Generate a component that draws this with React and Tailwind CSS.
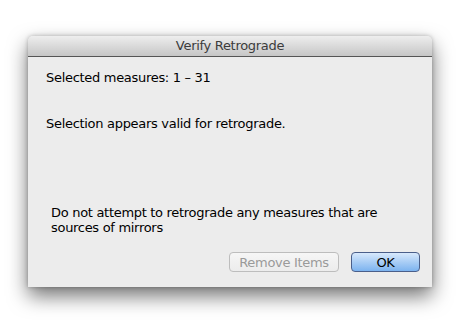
import React from "react";

const font = { fontFamily: '"Lucida Grande", "DejaVu Sans", sans-serif' };

export default function App() {
  return (
    <div
      className="flex h-[324px] w-[460px] items-start bg-white pl-[28px] pt-[36px] text-[13px] tracking-[-0.3px] text-black"
      style={font}
    >
      <div className="flex h-[251px] w-[404px] flex-col overflow-hidden rounded-t-[5px] bg-[#ececec] shadow-[0_9px_20px_rgba(0,0,0,0.55),0_0_4px_rgba(0,0,0,0.25)]">
        {/* title bar */}
        <div className="flex h-[21px] shrink-0 items-center justify-center border-b border-[#555555] bg-gradient-to-b from-[#eeeeee] to-[#c6c6c6] text-[#3c3c3c]">
          Verify Retrograde
        </div>

        <div className="flex flex-1 flex-col pb-[15px] pr-[12px]">
          <p className="ml-[18px] mt-[13px] leading-[16px]">Selected measures: 1 – 31</p>
          <p className="ml-[18px] mt-[30px] leading-[16px]">
            Selection appears valid for retrograde.
          </p>
          <p className="ml-[23px] mt-auto w-[340px] leading-[15px]">
            Do not attempt to retrograde any measures that are sources of mirrors
          </p>
          <div className="mt-[17px] flex justify-end gap-[12px]">
            <button
              disabled
              className="h-[20px] w-[110px] rounded-[4px] border border-[#bdbdbd] bg-gradient-to-b from-[#f6f6f6] to-[#ececec] text-[#9a9a9a]"
            >
              Remove Items
            </button>
            <button className="h-[20px] w-[69px] rounded-[4px] border border-[#4b5f8a] bg-gradient-to-b from-[#d8e9fc] via-[#a9cdf5] to-[#7cb3ef] text-black">
              OK
            </button>
          </div>
        </div>
      </div>
    </div>
  );
}
